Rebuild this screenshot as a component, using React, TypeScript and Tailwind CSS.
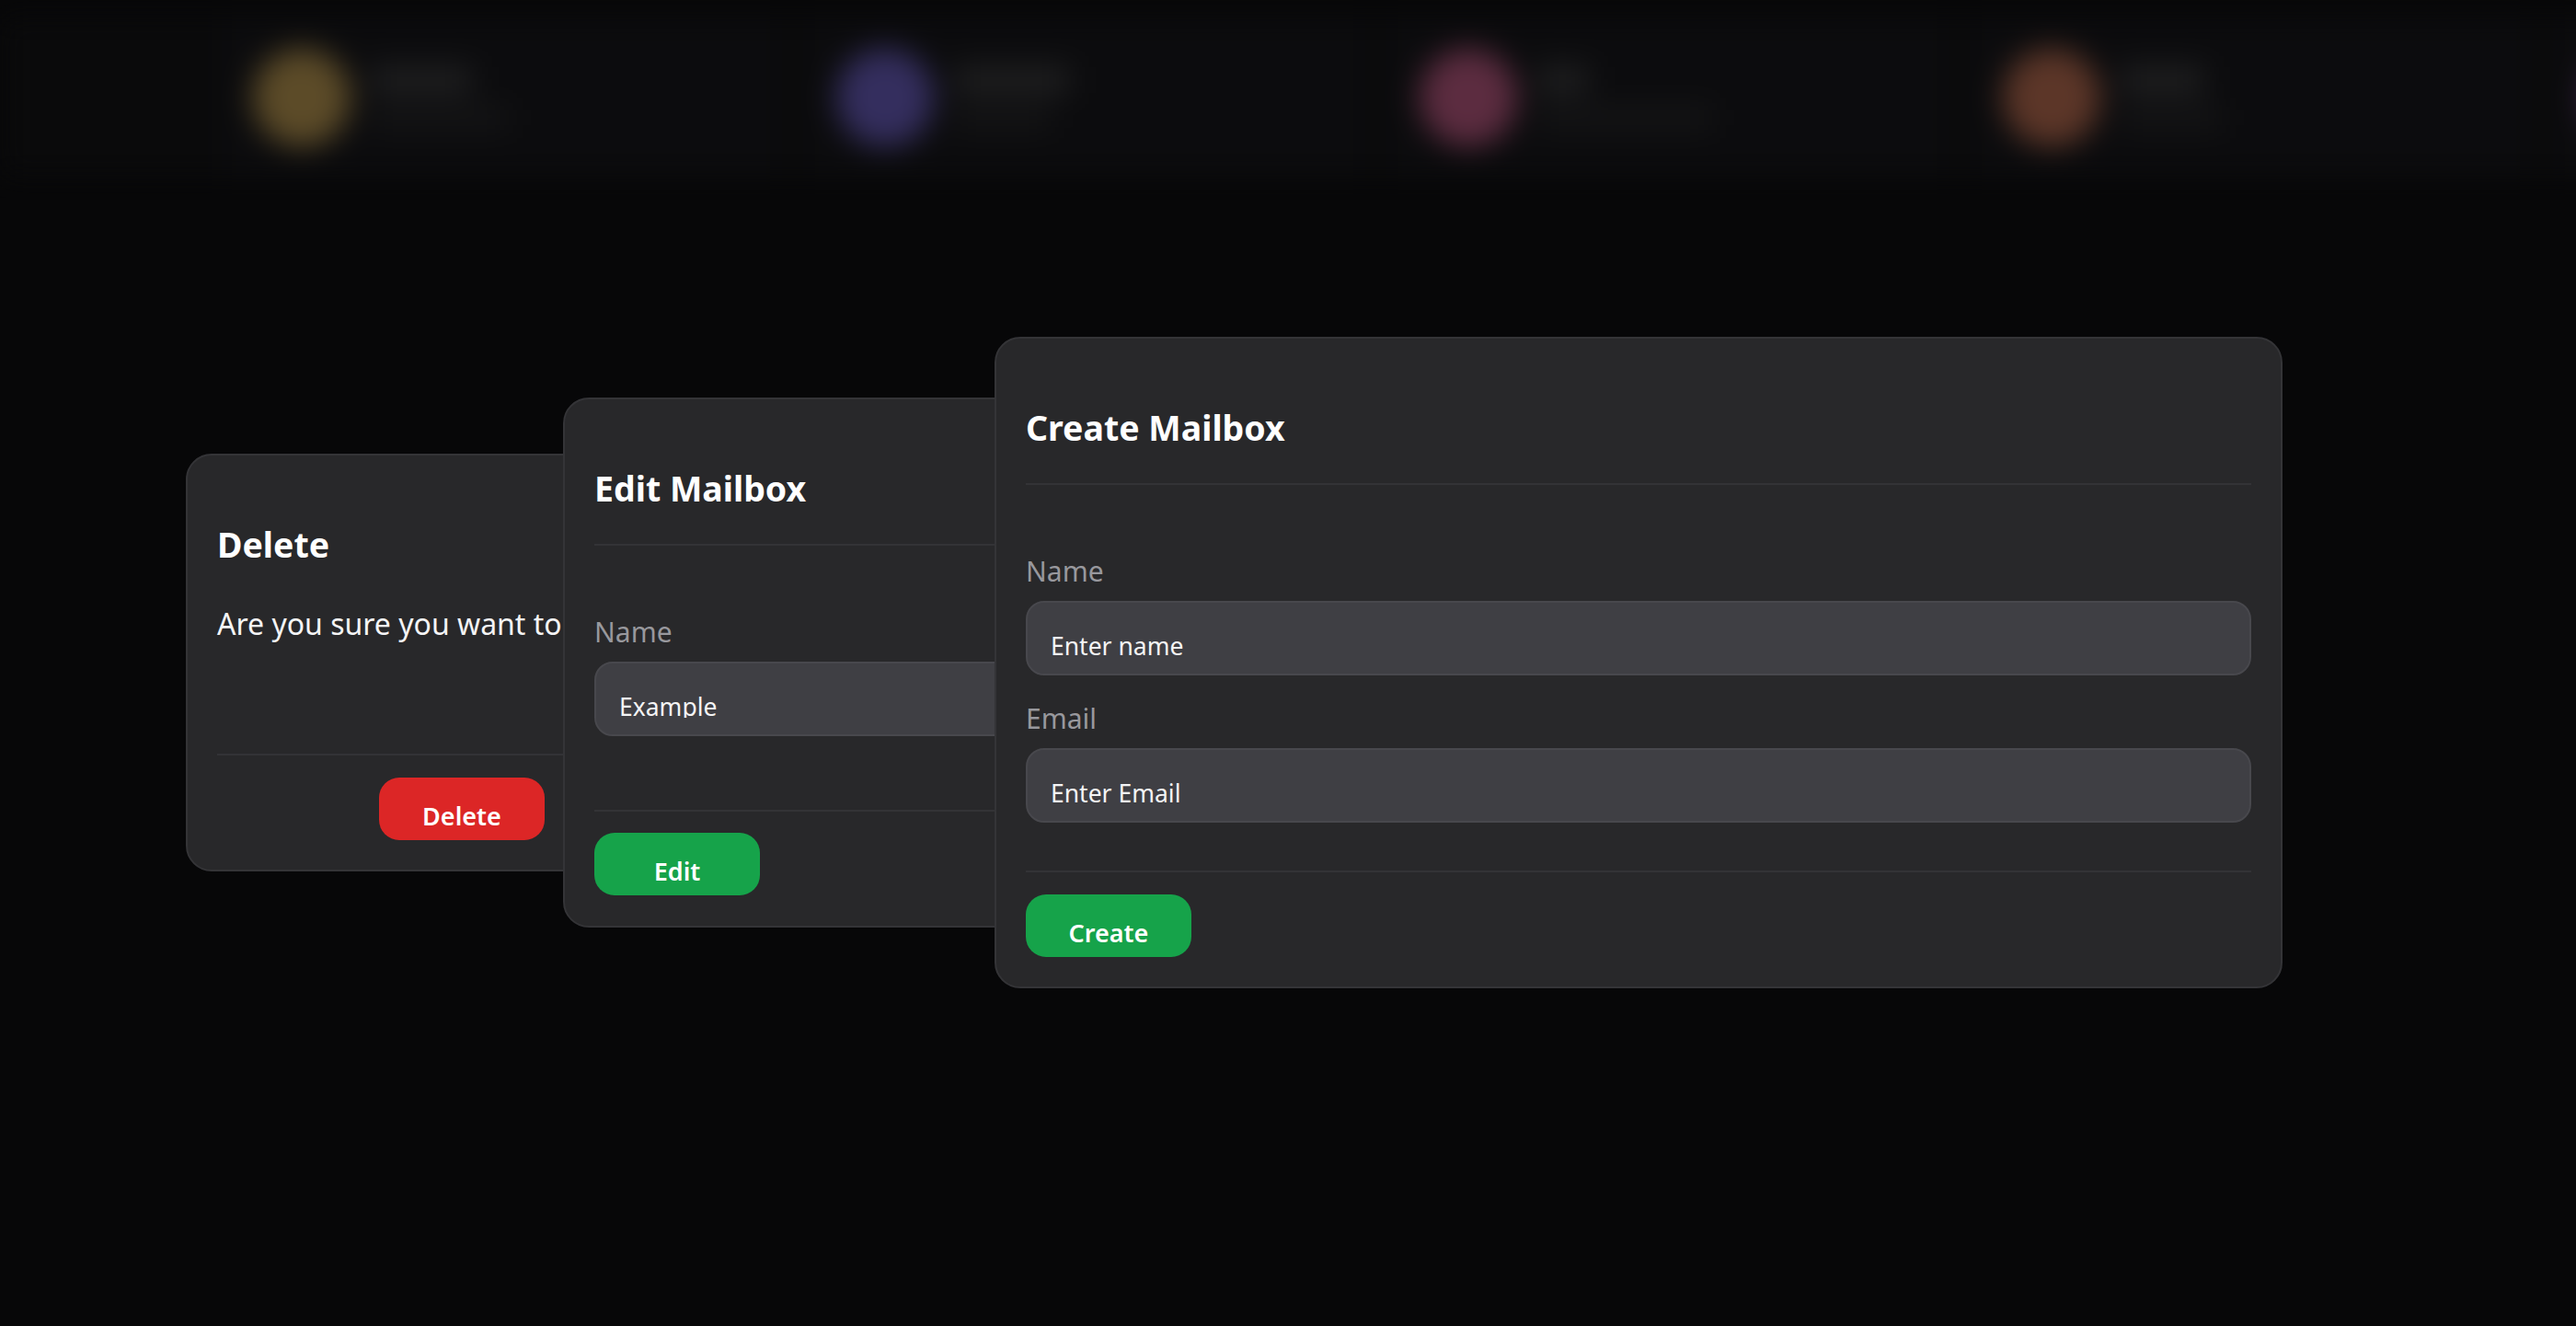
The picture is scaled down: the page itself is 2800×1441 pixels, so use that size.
const stats = [
    { circle: "bg-[#5c4b28]", name: "w-[110px]", sub: "w-[150px]" },
    { circle: "bg-[#342e5e]", name: "w-[125px]", sub: "w-[105px]" },
    { circle: "bg-[#5c2c40]", name: "w-[55px]", sub: "w-[190px]" },
    { circle: "bg-[#5c3628]", name: "w-[90px]", sub: "w-[110px]" },
    { circle: "bg-[#4a2a5c]", name: "w-[90px]", sub: "w-[110px]" },
];

function StatStrip() {
    return (
        <div className="h-[215px] overflow-hidden">
            <div className="mt-[18px] flex h-[175px] w-[3000px] gap-[27px] bg-[#0a0a0b] pl-[241px] blur-[16px]">
                {stats.map((s, i) => (
                    <div key={i} className="flex h-full w-[607px] shrink-0 items-center gap-[22px] bg-[#0c0c0e] pl-[34px]">
                        <div className={`h-[106px] w-[106px] shrink-0 rounded-full ${s.circle}`}></div>
                        <div className="flex flex-col gap-[14px]">
                            <div className={`h-[30px] bg-[#1f1f20] ${s.name}`}></div>
                            <div className={`h-[24px] bg-[#151516] ${s.sub}`}></div>
                        </div>
                    </div>
                ))}
            </div>
        </div>
    );
}

function Title({ children }: { children: string }) {
    return (
        <h2 className="border-b-2 border-[#333336] pt-[73px] pb-[36px] text-[37.5px] leading-[48px] font-bold text-white">
            {children}
        </h2>
    );
}

function Field({ label, text }: { label: string; text: string }) {
    return (
        <div>
            <label className="mb-[12px] block text-[30px] leading-[40px] text-[#98989d]">{label}</label>
            <div className="h-[81px] rounded-[20px] border-2 border-[#48484d] bg-[#3f3f44] pt-[29px] pl-[25px]">
                {/* texto cortado abajo, como en la captura */}
                <div className="h-[30px] overflow-hidden text-[26.5px] leading-[36px] text-[#f4f4f5]">{text}</div>
            </div>
        </div>
    );
}

function Action({ text, color }: { text: string; color: string }) {
    return (
        <button className={`flex h-[68px] w-[180px] items-center justify-center rounded-[22px] pt-[17px] text-[27px] font-semibold text-white ${color}`}>
            {text}
        </button>
    );
}

export default function App() {
    return (
        <div className="relative h-[1441px] overflow-hidden bg-[#070708] font-['Noto_Sans',sans-serif]">
            <StatStrip />

            {/* Delete */}
            <div className="absolute top-[493px] left-[202px] z-10 h-[454px] w-[800px] rounded-[28px] border-2 border-[#343437] bg-[#28282a] px-[32px]">
                <h2 className="pt-[73px] text-[37.5px] leading-[48px] font-bold text-white">Delete</h2>
                <p className="mt-[38px] h-[167px] border-b-2 border-[#333336] text-[32px] leading-[48px] whitespace-nowrap text-[#f4f4f5]">
                    Are you sure you want to delete this mailbox?
                </p>
                <div className="mt-[24px] ml-[176px]">
                    <Action text="Delete" color="bg-[#dc2626]" />
                </div>
            </div>

            {/* Edit */}
            <div className="absolute top-[432px] left-[612px] z-20 h-[576px] w-[1000px] rounded-[28px] border-2 border-[#343437] bg-[#28282a] px-[32px]">
                <Title>Edit Mailbox</Title>
                <div className="border-b-2 border-[#333336] pt-[74px] pb-[80px]">
                    <Field label="Name" text="Example" />
                </div>
                <div className="pt-[23px]">
                    <Action text="Edit" color="bg-[#16a34a]" />
                </div>
            </div>

            {/* Create */}
            <div className="absolute top-[366px] left-[1081px] z-30 h-[708px] w-[1400px] rounded-[28px] border-2 border-[#343437] bg-[#28282a] px-[32px]">
                <Title>Create Mailbox</Title>
                <div className="flex flex-col gap-[27px] border-b-2 border-[#333336] pt-[74px] pb-[52px]">
                    <Field label="Name" text="Enter name" />
                    <Field label="Email" text="Enter Email" />
                </div>
                <div className="pt-[24px]">
                    <Action text="Create" color="bg-[#16a34a]" />
                </div>
            </div>
        </div>
    );
}
